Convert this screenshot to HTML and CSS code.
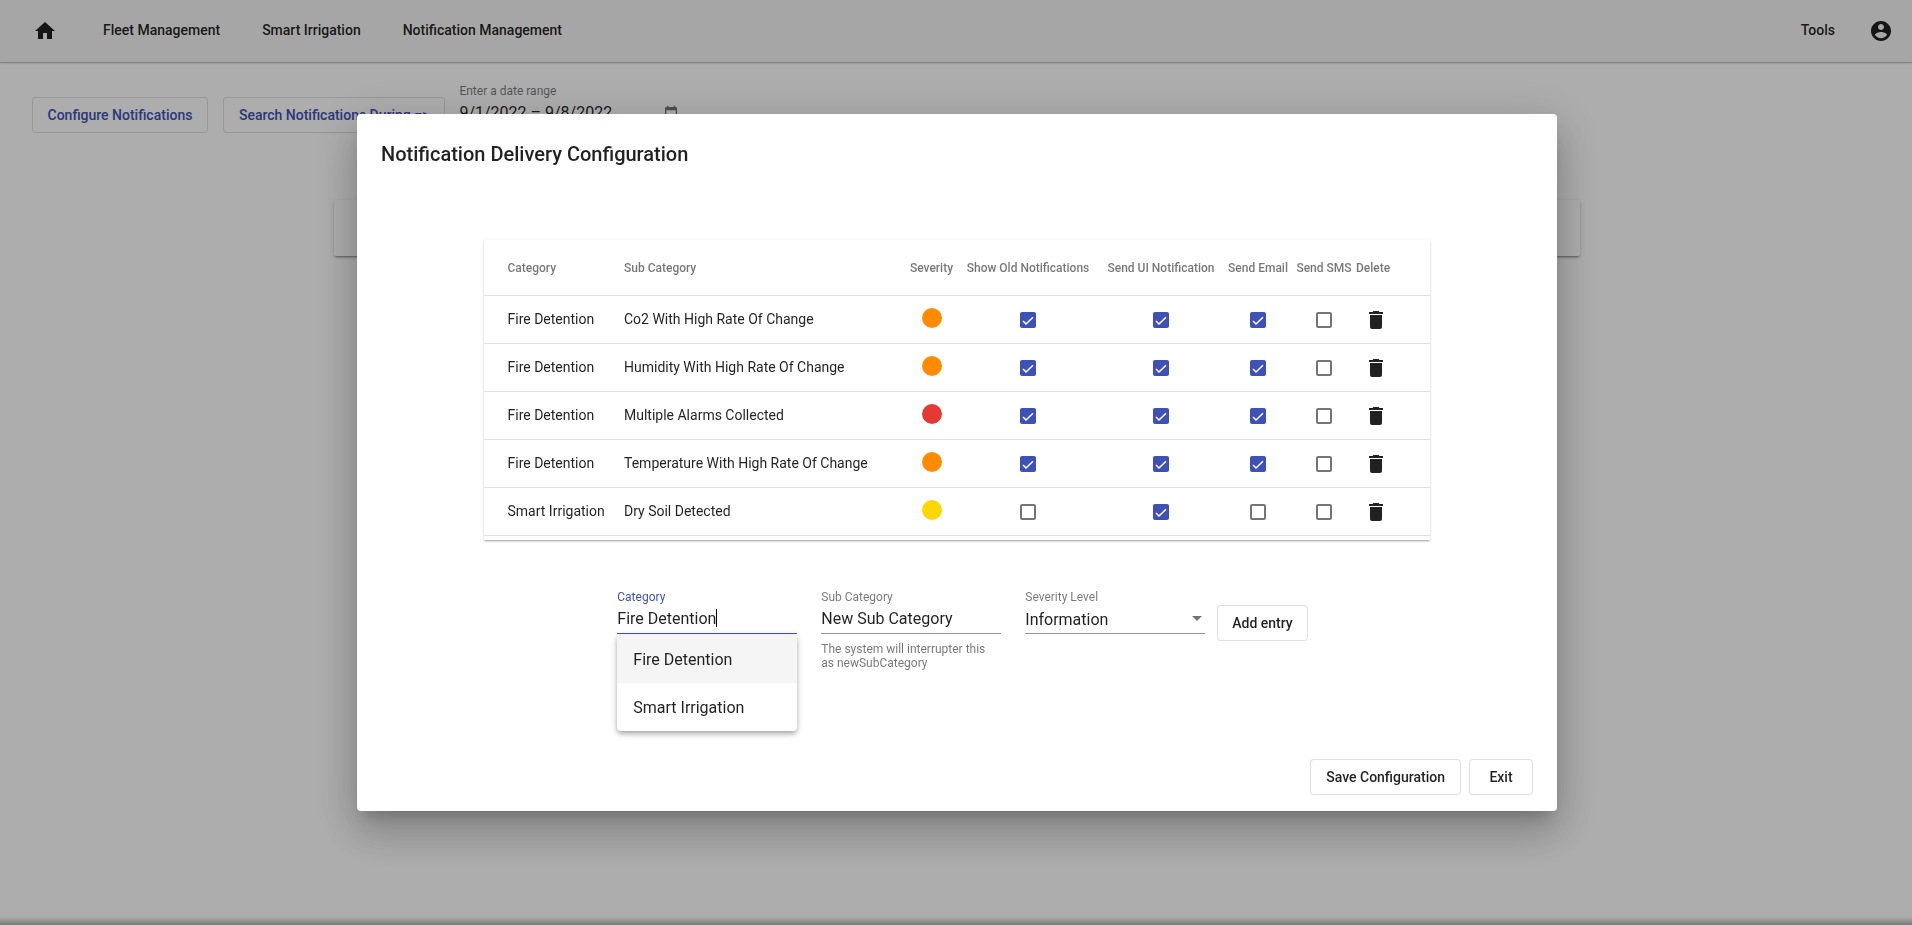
FILE: index.html
```html
<!DOCTYPE html>
<html lang="en">
<head>
    <meta charset="UTF-8">
    <meta name="viewport" content="width=device-width, initial-scale=1.0">
    <title>Notification Management</title>
    <link rel="stylesheet" href="styles.css">
</head>
<body>
    <!-- Top bar -->
    <header class="toolbar">
        <svg class="icon home-icon" viewBox="0 0 24 24"><path d="M10 20v-6h4v6h5v-8h3L12 3 2 12h3v8z"/></svg>
        <nav class="nav-links">
            <a>Fleet Management</a>
            <a>Smart Irrigation</a>
            <a>Notification Management</a>
        </nav>
        <a class="tools-link">Tools</a>
        <svg class="icon account-icon" viewBox="0 0 24 24"><path d="M12 2C6.48 2 2 6.48 2 12s4.48 10 10 10 10-4.48 10-10S17.52 2 12 2zm0 3c1.66 0 3 1.34 3 3s-1.34 3-3 3-3-1.34-3-3 1.34-3 3-3zm0 14.2c-2.5 0-4.71-1.28-6-3.22.03-1.99 4-3.08 6-3.08 1.99 0 5.97 1.09 6 3.08-1.29 1.94-3.5 3.22-6 3.22z"/></svg>
    </header>

    <!-- Page behind the dialog -->
    <main class="page">
        <div class="page-actions">
            <button class="btn btn-primary">Configure Notifications</button>
            <button class="btn btn-primary">Search Notifications During =&gt;</button>
            <div class="date-field">
                <label>Enter a date range</label>
                <div class="date-value">
                    <span>9/1/2022 – 9/8/2022</span>
                    <svg class="icon calendar-icon" viewBox="0 0 24 24"><path d="M19 3h-1V1h-2v2H8V1H6v2H5c-1.1 0-2 .9-2 2v14c0 1.1.9 2 2 2h14c1.1 0 2-.9 2-2V5c0-1.1-.9-2-2-2zm0 16H5V8h14v11z"/></svg>
                </div>
            </div>
        </div>
        <div class="page-card"></div>
    </main>
    <div class="page-footer"></div>

    <!-- Dialog -->
    <div class="overlay">
        <section class="dialog">
            <h2 class="dialog-title">Notification Delivery Configuration</h2>

            <div class="table-card">
                <div class="row head-row">
                    <div>Category</div>
                    <div>Sub Category</div>
                    <div class="center">Severity</div>
                    <div class="center">Show Old Notifications</div>
                    <div class="center">Send UI Notification</div>
                    <div class="center">Send Email</div>
                    <div class="center">Send SMS</div>
                    <div>Delete</div>
                </div>

                <div class="row">
                    <div>Fire Detention</div>
                    <div>Co2 With High Rate Of Change</div>
                    <div class="center"><span class="dot orange"></span></div>
                    <div class="center"><span class="check on"><svg viewBox="0 0 16 16"><path d="M3 9l3 3 7-6.8"/></svg></span></div>
                    <div class="center"><span class="check on"><svg viewBox="0 0 16 16"><path d="M3 9l3 3 7-6.8"/></svg></span></div>
                    <div class="center"><span class="check on"><svg viewBox="0 0 16 16"><path d="M3 9l3 3 7-6.8"/></svg></span></div>
                    <div class="center"><span class="check"></span></div>
                    <div><svg class="icon trash-icon" viewBox="0 0 24 24"><path d="M6 19c0 1.1.9 2 2 2h8c1.1 0 2-.9 2-2V7H6v12zM19 4h-3.5l-1-1h-5l-1 1H5v2h14V4z"/></svg></div>
                </div>

                <div class="row">
                    <div>Fire Detention</div>
                    <div>Humidity With High Rate Of Change</div>
                    <div class="center"><span class="dot orange"></span></div>
                    <div class="center"><span class="check on"><svg viewBox="0 0 16 16"><path d="M3 9l3 3 7-6.8"/></svg></span></div>
                    <div class="center"><span class="check on"><svg viewBox="0 0 16 16"><path d="M3 9l3 3 7-6.8"/></svg></span></div>
                    <div class="center"><span class="check on"><svg viewBox="0 0 16 16"><path d="M3 9l3 3 7-6.8"/></svg></span></div>
                    <div class="center"><span class="check"></span></div>
                    <div><svg class="icon trash-icon" viewBox="0 0 24 24"><path d="M6 19c0 1.1.9 2 2 2h8c1.1 0 2-.9 2-2V7H6v12zM19 4h-3.5l-1-1h-5l-1 1H5v2h14V4z"/></svg></div>
                </div>

                <div class="row">
                    <div>Fire Detention</div>
                    <div>Multiple Alarms Collected</div>
                    <div class="center"><span class="dot red"></span></div>
                    <div class="center"><span class="check on"><svg viewBox="0 0 16 16"><path d="M3 9l3 3 7-6.8"/></svg></span></div>
                    <div class="center"><span class="check on"><svg viewBox="0 0 16 16"><path d="M3 9l3 3 7-6.8"/></svg></span></div>
                    <div class="center"><span class="check on"><svg viewBox="0 0 16 16"><path d="M3 9l3 3 7-6.8"/></svg></span></div>
                    <div class="center"><span class="check"></span></div>
                    <div><svg class="icon trash-icon" viewBox="0 0 24 24"><path d="M6 19c0 1.1.9 2 2 2h8c1.1 0 2-.9 2-2V7H6v12zM19 4h-3.5l-1-1h-5l-1 1H5v2h14V4z"/></svg></div>
                </div>

                <div class="row">
                    <div>Fire Detention</div>
                    <div>Temperature With High Rate Of Change</div>
                    <div class="center"><span class="dot orange"></span></div>
                    <div class="center"><span class="check on"><svg viewBox="0 0 16 16"><path d="M3 9l3 3 7-6.8"/></svg></span></div>
                    <div class="center"><span class="check on"><svg viewBox="0 0 16 16"><path d="M3 9l3 3 7-6.8"/></svg></span></div>
                    <div class="center"><span class="check on"><svg viewBox="0 0 16 16"><path d="M3 9l3 3 7-6.8"/></svg></span></div>
                    <div class="center"><span class="check"></span></div>
                    <div><svg class="icon trash-icon" viewBox="0 0 24 24"><path d="M6 19c0 1.1.9 2 2 2h8c1.1 0 2-.9 2-2V7H6v12zM19 4h-3.5l-1-1h-5l-1 1H5v2h14V4z"/></svg></div>
                </div>

                <div class="row">
                    <div>Smart Irrigation</div>
                    <div>Dry Soil Detected</div>
                    <div class="center"><span class="dot yellow"></span></div>
                    <div class="center"><span class="check"></span></div>
                    <div class="center"><span class="check on"><svg viewBox="0 0 16 16"><path d="M3 9l3 3 7-6.8"/></svg></span></div>
                    <div class="center"><span class="check"></span></div>
                    <div class="center"><span class="check"></span></div>
                    <div><svg class="icon trash-icon" viewBox="0 0 24 24"><path d="M6 19c0 1.1.9 2 2 2h8c1.1 0 2-.9 2-2V7H6v12zM19 4h-3.5l-1-1h-5l-1 1H5v2h14V4z"/></svg></div>
                </div>
            </div>

            <!-- New entry form -->
            <div class="entry-form">
                <div class="field field-focus">
                    <label>Category</label>
                    <div class="field-value">Fire Detention<span class="caret"></span></div>
                    <ul class="autocomplete">
                        <li class="active">Fire Detention</li>
                        <li>Smart Irrigation</li>
                    </ul>
                </div>
                <div class="field">
                    <label>Sub Category</label>
                    <div class="field-value">New Sub Category</div>
                    <p class="hint">The system will interrupter this as newSubCategory</p>
                </div>
                <div class="field">
                    <label>Severity Level</label>
                    <div class="field-value select-value">Information<span class="arrow"></span></div>
                </div>
                <button class="btn add-btn">Add entry</button>
            </div>

            <div class="dialog-actions">
                <button class="btn">Save Configuration</button>
                <button class="btn">Exit</button>
            </div>
        </section>
    </div>
</body>
</html>
```

FILE: styles.css
```css
/* Base */
html, body {
    height: 100%;
}
body {
    margin: 0;
    font-family: Roboto, "Liberation Sans", sans-serif;
    color: rgba(0, 0, 0, 0.87);
    background-color: #fff;
    overflow: hidden;
    display: flex;
    flex-direction: column;
}
.icon {
    display: block;
    width: 24px;
    height: 24px;
    fill: currentColor;
}
.btn {
    min-width: 64px;
    height: 36px;
    padding: 0 15px;
    background: #fff;
    border: 1px solid rgba(0, 0, 0, 0.12);
    border-radius: 4px;
    font-family: inherit;
    font-size: 14px;
    font-weight: 500;
    color: rgba(0, 0, 0, 0.87);
}

/* Top bar */
.toolbar {
    display: flex;
    align-items: center;
    flex: 0 0 63px;
    box-sizing: border-box;
    height: 63px;
    padding: 0 19px 1px 33px;
    background-color: #f5f5f5;
    border-bottom: 1px solid #bcbcbc;
    box-shadow: 0 1px 2px rgba(0, 0, 0, 0.1);
}
.nav-links {
    display: flex;
    gap: 42px;
    margin-left: 46px;
    flex: 1;
}
.nav-links a, .tools-link {
    font-size: 14px;
    font-weight: 500;
    line-height: 56px;
    margin-bottom: 2px;
}
.tools-link {
    margin-right: 34px;
}

/* Page behind the dialog */
.page {
    flex: 1;
    padding: 34px 32px 0;
}
.page-actions {
    display: flex;
    gap: 15px;
    height: 103px;
}
.page-actions .btn:first-child {
    padding: 0 14.5px;
}
.btn-primary {
    color: #3f51b5;
}
.date-field {
    width: 220px;
    margin: -13px 0 0 -1px;
}
.date-field label {
    display: block;
    font-size: 12px;
    line-height: 14px;
    color: rgba(0, 0, 0, 0.54);
}
.date-value {
    display: flex;
    align-items: center;
    justify-content: space-between;
    font-size: 16px;
    margin-top: 5px;
}
.calendar-icon {
    width: 16px;
    height: 16px;
    color: rgba(0, 0, 0, 0.54);
}
.page-card {
    width: 1246px;
    height: 56px;
    margin-left: 302px;
    background: #fff;
    border-radius: 2px;
    box-shadow: 0 3px 1px -2px rgba(0, 0, 0, 0.2), 0 2px 2px rgba(0, 0, 0, 0.14), 0 1px 5px rgba(0, 0, 0, 0.12);
}
.page-footer {
    flex: 0 0 8px;
    background: linear-gradient(#fff, #b4b4b4);
}

/* Dialog */
.overlay {
    position: fixed;
    inset: 0;
    display: flex;
    align-items: center;
    justify-content: center;
    padding-left: 2px;
    background-color: rgba(0, 0, 0, 0.32);
}
.dialog {
    display: flex;
    flex-direction: column;
    box-sizing: border-box;
    width: 1200px;
    height: 697px;
    padding: 24px;
    background: #fff;
    border-radius: 4px;
    box-shadow: 0 11px 15px -7px rgba(0, 0, 0, 0.2), 0 24px 38px 3px rgba(0, 0, 0, 0.14), 0 9px 46px 8px rgba(0, 0, 0, 0.12);
}
.dialog-title {
    margin: 0 0 70px;
    font-size: 20px;
    font-weight: 500;
    line-height: 32px;
}

/* Table */
.table-card {
    align-self: center;
    box-sizing: border-box;
    width: 946px;
    height: 300px;
    background: #fff;
    box-shadow: 0 2px 2px -1px rgba(0, 0, 0, 0.2), 0 1px 1px rgba(0, 0, 0, 0.1), 0 1px 3px rgba(0, 0, 0, 0.12);
}
.row {
    display: grid;
    grid-template-columns: 140px 281px 53px 140px 126px 68px 64px 74px;
    align-items: center;
    height: 48px;
    box-sizing: content-box;
    border-bottom: 1px solid #e0e0e0;
    margin-bottom: -1px;
    font-size: 14px;
}
.row > div:first-child {
    padding-left: 23.5px;
}
.row > div:last-child {
    padding-left: 8px;
}
.head-row {
    height: 55px;
    font-size: 12px;
    font-weight: 500;
    color: rgba(0, 0, 0, 0.54);
}
.head-row > div:last-child {
    padding-left: 0;
}
.center {
    display: flex;
    justify-content: center;
    white-space: nowrap;
}
.dot {
    display: block;
    width: 20px;
    height: 20px;
    margin-top: -3px;
    border-radius: 50%;
}
.orange { background-color: #ff8c00; }
.red { background-color: #e53935; }
.yellow { background-color: #ffd600; }
.check {
    display: block;
    box-sizing: border-box;
    width: 16px;
    height: 16px;
    margin-top: 2px;
    border: 2px solid rgba(0, 0, 0, 0.54);
    border-radius: 2px;
}
.check.on {
    background-color: #3f51b5;
    border: none;
}
.check svg {
    display: block;
    fill: none;
    stroke: #fff;
    stroke-width: 1.5;
}
.trash-icon {
    margin-top: 2px;
    color: #212121;
}

/* New entry form */
.entry-form {
    display: flex;
    align-items: flex-start;
    justify-content: center;
    gap: 24px;
    margin-top: 50px;
    padding-left: 11px;
}
.field {
    position: relative;
    width: 180px;
}
.field label {
    display: block;
    font-size: 12px;
    line-height: 14px;
    color: rgba(0, 0, 0, 0.54);
}
.field-value {
    box-sizing: border-box;
    height: 30px;
    padding-top: 5px;
    font-size: 16px;
    line-height: 20px;
    border-bottom: 1px solid rgba(0, 0, 0, 0.42);
}
.field-focus label {
    color: #3f51b5;
}
.field-focus .field-value {
    border-bottom: 1px solid #3f51b5;
}
.caret {
    display: inline-block;
    width: 1px;
    height: 18px;
    vertical-align: -3px;
    background-color: #000;
}
.select-value {
    display: flex;
    justify-content: space-between;
    padding-top: 6px;
}
.arrow {
    width: 0;
    height: 0;
    margin: 6px 3px 0 0;
    border-left: 5px solid transparent;
    border-right: 5px solid transparent;
    border-top: 5px solid rgba(0, 0, 0, 0.54);
}
.hint {
    width: 170px;
    margin: 8px 0 0;
    font-size: 12px;
    line-height: 14px;
    color: rgba(0, 0, 0, 0.54);
}
.add-btn {
    margin-left: -12px;
    margin-top: 15px;
    padding: 0 14px;
}
.autocomplete {
    position: absolute;
    top: 45px;
    left: 0;
    width: 180px;
    margin: 0;
    padding: 0;
    list-style: none;
    background: #fff;
    border-radius: 0 0 4px 4px;
    box-shadow: 0 2px 4px -1px rgba(0, 0, 0, 0.2), 0 4px 5px rgba(0, 0, 0, 0.14), 0 1px 10px rgba(0, 0, 0, 0.12);
}
.autocomplete li {
    height: 48px;
    padding: 0 16px;
    font-size: 16px;
    line-height: 50px;
}
.autocomplete li.active {
    background-color: #f5f5f5;
}

/* Dialog buttons */
.dialog-actions {
    display: flex;
    justify-content: flex-end;
    gap: 8px;
    margin-top: auto;
    margin-bottom: -8px;
}
```
